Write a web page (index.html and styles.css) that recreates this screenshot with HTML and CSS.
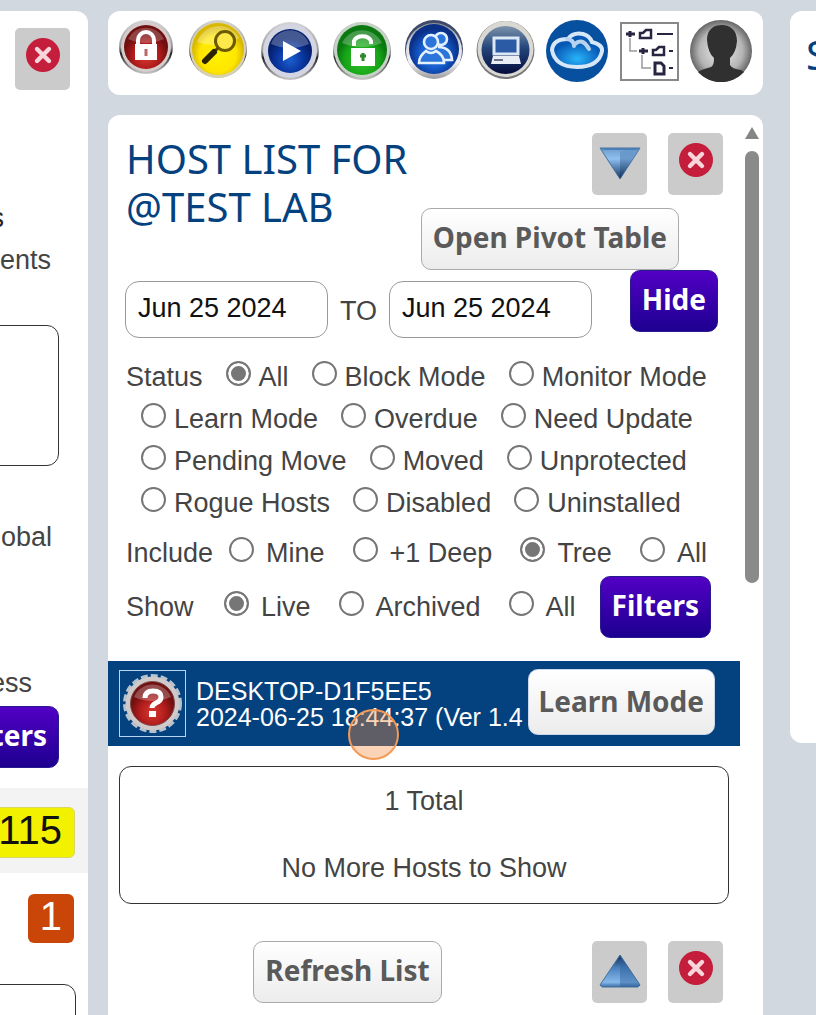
FILE: index.html
```html
<!DOCTYPE html>
<html lang="en">
<head>
    <meta charset="UTF-8">
    <meta name="viewport" content="width=device-width, initial-scale=1">
    <title>Host List</title>
    <link rel="stylesheet" href="styles.css">
</head>
<body>
    <!-- shared gradients and shapes -->
    <svg class="defs" width="0" height="0" aria-hidden="true">
        <defs>
            <linearGradient id="chrome" x1="0" y1="0" x2="0" y2="1"><stop offset="0" stop-color="#8f9096"/><stop offset=".4" stop-color="#dcdce2"/><stop offset=".7" stop-color="#f2f2f4"/><stop offset="1" stop-color="#9a9a9c"/></linearGradient>
            <linearGradient id="rim" x1="0" y1="0" x2="0" y2="1"><stop offset="0" stop-color="#d5d5d5"/><stop offset=".5" stop-color="#9a9a9a"/><stop offset=".62" stop-color="#222"/><stop offset="1" stop-color="#c9c9c9"/></linearGradient>
            <radialGradient id="red" cy=".7"><stop offset="0" stop-color="#d83a30"/><stop offset=".6" stop-color="#b01c1c"/><stop offset="1" stop-color="#701010"/></radialGradient>
            <radialGradient id="yellow" cy=".6"><stop offset="0" stop-color="#fff200"/><stop offset=".7" stop-color="#ffe600"/><stop offset="1" stop-color="#d8b800"/></radialGradient>
            <radialGradient id="blue" cy=".7"><stop offset="0" stop-color="#1d5fd0"/><stop offset=".6" stop-color="#0a36a0"/><stop offset="1" stop-color="#06206e"/></radialGradient>
            <radialGradient id="green" cy=".7"><stop offset="0" stop-color="#35c22a"/><stop offset=".7" stop-color="#16a418"/><stop offset="1" stop-color="#0a7a10"/></radialGradient>
            <radialGradient id="sky" cy=".6"><stop offset="0" stop-color="#3b8df0"/><stop offset=".6" stop-color="#1459c8"/><stop offset="1" stop-color="#0a2f86"/></radialGradient>
            <linearGradient id="navy" x1="0" y1="0" x2="0" y2="1"><stop offset="0" stop-color="#7d93ab"/><stop offset=".45" stop-color="#24467c"/><stop offset="1" stop-color="#040c3c"/></linearGradient>
            <radialGradient id="cloudfill" cy=".75"><stop offset="0" stop-color="#28b4fa"/><stop offset="1" stop-color="#0757b4"/></radialGradient>
            <radialGradient id="grey"><stop offset="0" stop-color="#eee"/><stop offset=".7" stop-color="#b4b4b4"/><stop offset="1" stop-color="#666"/></radialGradient>
            <linearGradient id="gem" x1="0" y1="0" x2="0" y2="1"><stop offset="0" stop-color="#6d9dcc"/><stop offset=".35" stop-color="#8fc0f0"/><stop offset="1" stop-color="#10325f"/></linearGradient>
            <linearGradient id="gem-shade" x1="0" y1="0" x2="0" y2="1"><stop offset="0" stop-color="#5c92c8"/><stop offset="1" stop-color="#0a2850"/></linearGradient>
            <linearGradient id="gem-rise" x1="0" y1="0" x2="0" y2="1"><stop offset="0" stop-color="#10284c"/><stop offset=".4" stop-color="#4a82be"/><stop offset=".85" stop-color="#86b8ea"/><stop offset="1" stop-color="#3a6ca2"/></linearGradient>
            <symbol id="cross" viewBox="0 0 34 34">
                <circle cx="17" cy="17" r="17" fill="#c41e3c"/>
                <path d="M11 11l12 12M23 11L11 23" stroke="#f7d5da" stroke-width="4.4" stroke-linecap="round"/>
            </symbol>
            <symbol id="gem-down" viewBox="0 0 42 34">
                <path d="M1 2h40L21 33z" fill="url(#gem)" stroke="#44719f"/>
                <path d="M21 5v28L40 2z" fill="url(#gem-shade)" opacity=".45"/>
                <path d="M2 2h38l-2 2H4z" fill="#4a7eb4"/>
            </symbol>
            <symbol id="gem-up" viewBox="0 0 42 34">
                <path d="M21 1L1 31l2 2h36l2-2z" fill="url(#gem-rise)" stroke="#44719f"/>
                <path d="M21 1v32h18l2-2z" fill="#2c5f9a" opacity=".45"/>
            </symbol>
        </defs>
    </svg>

    <div class="layout">
        <section class="panel side-left">
            <button class="icon-btn" aria-label="Close"><svg width="34" height="34"><use href="#cross"/></svg></button>
            <p class="clip-s">s</p>
            <p class="clip-ents">ents</p>
            <div class="outline-box"></div>
            <p class="clip-obal">obal</p>
            <p class="clip-ess">ess</p>
            <button class="btn btn-purple">Filters</button>
            <div class="count-row"><span class="count yellow">115</span></div>
            <span class="count orange">1</span>
            <div class="outline-box last"></div>
        </section>

        <main class="center">
            <nav class="panel toolbar">
                <a href="#" aria-label="Locked">
                    <svg width="54" height="55" viewBox="0 0 54 55">
                        <circle cx="27" cy="27" r="27" fill="url(#rim)"/><circle cx="27" cy="27" r="25" fill="#d6cccc"/><circle cx="27" cy="27" r="22" fill="url(#red)"/>
                        <path d="M9 19a20 20 0 0 1 36 0q-18 8-36 0z" fill="#fff" opacity=".22"/>
                        <path d="M19 26v-6a8 8 0 0 1 16 0v6" fill="none" stroke="#fff" stroke-width="4"/>
                        <rect x="16" y="24" width="22" height="16" fill="#fff"/><path d="M27 29v7" stroke="#b66" stroke-width="3"/>
                    </svg>
                </a>
                <a href="#" aria-label="Search">
                    <svg width="58" height="59" viewBox="0 0 58 59">
                        <circle cx="29" cy="29" r="29" fill="url(#rim)"/><circle cx="29" cy="30" r="28" fill="#d8d2b0"/><circle cx="29" cy="29" r="26" fill="url(#yellow)"/>
                        <path d="M8 22a23 23 0 0 1 42-4q-20 12-42 4z" fill="#fff" opacity=".3"/>
                        <circle cx="36" cy="21" r="9.5" fill="#ffe94a" stroke="#6b5a00" stroke-width="3"/>
                        <path d="M29 28l-5 5" stroke="#5a4a00" stroke-width="3"/><path d="M25 32L16 41" stroke="#2a2200" stroke-width="6" stroke-linecap="round"/>
                    </svg>
                </a>
                <a href="#" aria-label="Run">
                    <svg class="drop" width="58" height="59" viewBox="0 0 58 59">
                        <circle cx="29" cy="29" r="29" fill="url(#rim)"/><circle cx="29" cy="29" r="27" fill="#d3d5e2"/><circle cx="29" cy="29" r="22" fill="url(#blue)"/>
                        <path d="M10 22a20 20 0 0 1 38 0q-19 8-38 0z" fill="#fff" opacity=".25"/>
                        <path d="M22 19l18 10-18 10z" fill="#fff"/>
                    </svg>
                </a>
                <a href="#" aria-label="Unlocked">
                    <svg class="drop" width="58" height="58" viewBox="0 0 58 58">
                        <circle cx="29" cy="29" r="29" fill="url(#rim)"/><circle cx="29" cy="28" r="28" fill="#c5d2c5"/><circle cx="29" cy="28" r="25" fill="url(#green)"/>
                        <path d="M9 21a22 22 0 0 1 40 0q-20 8-40 0z" fill="#fff" opacity=".25"/>
                        <path d="M21 24v-5a9 7 0 0 1 17 0v3" fill="none" stroke="#fff" stroke-width="4"/>
                        <rect x="18" y="26" width="24" height="18" fill="#fff"/><path d="M30 31v8M27 34h6" stroke="#2a8a2a" stroke-width="3"/>
                    </svg>
                </a>
                <a href="#" aria-label="Users">
                    <svg width="58" height="59" viewBox="0 0 58 59">
                        <circle cx="29" cy="29" r="29" fill="#3d4a6a"/><circle cx="29" cy="31" r="28" fill="url(#chrome)"/><circle cx="29" cy="29" r="25" fill="url(#sky)"/>
                        <g fill="#2b74da" stroke="#e4f2ff" stroke-width="2.6">
                            <circle cx="36" cy="19" r="6"/><path d="M33 27q13 0 14 13H32"/>
                            <circle cx="26" cy="22" r="7"/><path d="M14 43q0-7 7-12 5 4 10 0 8 4 8 12z"/>
                        </g>
                    </svg>
                </a>
                <a href="#" aria-label="Computers">
                    <svg width="59" height="60" viewBox="0 0 59 60">
                        <circle cx="29.5" cy="30" r="29" fill="#777"/><circle cx="29.5" cy="29" r="28" fill="#d9d8d3"/><circle cx="29.5" cy="30" r="24" fill="url(#navy)"/>
                        <rect x="18" y="18" width="24" height="16" fill="#2a5ba4" stroke="#dce8f5" stroke-width="3"/>
                        <path d="M17 36h26l2 8H15z" fill="#e9eef5"/><path d="M18 40h9" stroke="#6b7488" stroke-width="2"/>
                    </svg>
                </a>
                <a href="#" aria-label="Cloud">
                    <svg width="62" height="62" viewBox="0 0 62 62">
                        <circle cx="31" cy="31" r="31" fill="#07509f"/>
                        <path d="M22 19q5-7 15-5 7 2 9 8 11 3 10 9-3 16-25 16T6 30q1-11 16-11z" fill="url(#cloudfill)" stroke="#d5e7f8" stroke-width="4"/>
                        <path d="M21 19q7 1 7 7M29 24q7-7 14 5" fill="none" stroke="#b9d3ee" stroke-width="4" stroke-linecap="round"/>
                    </svg>
                </a>
                <a href="#" aria-label="Tree">
                    <svg class="drop" width="59" height="59" viewBox="0 0 59 59">
                        <rect x="1" y="1" width="57" height="57" fill="#fff" stroke="#888" stroke-width="2"/>
                        <g fill="none" stroke="#999" stroke-width="1.5"><path d="M10 16v13h7M22 33v13h9"/></g>
                        <g stroke="#2a2440" stroke-width="2" fill="none">
                            <path d="M6 12h9M10 9v6M19 29h9M23 26v6" stroke-width="3"/>
                            <path d="M37 12h16M49 29h4M49 46h4"/>
                            <path d="M20 16v-5h3l3-3h5v8zM33 33v-5h3l3-3h5v8z" stroke-width="2.5"/>
                            <path d="M35 41h6l3 3v8h-9z" stroke-width="3"/>
                        </g>
                    </svg>
                </a>
                <a href="#" aria-label="Profile">
                    <svg width="62" height="62" viewBox="0 0 62 62">
                        <circle cx="31" cy="31" r="31" fill="url(#grey)"/>
                        <path d="M17 20C17 9 24 5 32 5s15 5 15 16q-1 12-7 17v7q2 4 11 5l3 2A31 31 0 0 1 8 52q2-2 13-5 3-1 3-9-6-5-7-18z" fill="#303030"/>
                    </svg>
                </a>
            </nav>

            <section class="panel hosts">
                <div class="hosts-body">
                    <header class="hosts-header">
                        <h1>HOST LIST FOR @TEST LAB</h1>
                        <div class="header-actions">
                            <div class="icon-row">
                                <button class="icon-btn gem" aria-label="Move down"><svg width="42" height="34"><use href="#gem-down"/></svg></button>
                                <button class="icon-btn" aria-label="Close"><svg width="34" height="34"><use href="#cross"/></svg></button>
                            </div>
                            <button class="btn pivot">Open Pivot Table</button>
                        </div>
                    </header>

                    <form class="filters">
                        <div class="date-row">
                            <input type="text" value="Jun 25 2024" aria-label="From date">
                            <span>TO</span>
                            <input type="text" value="Jun 25 2024" aria-label="To date">
                            <button type="button" class="btn btn-purple">Hide</button>
                        </div>

                        <div class="options status">
                            <span>Status</span>
                            <label><input type="radio" name="status" checked>All</label>
                            <label><input type="radio" name="status">Block Mode</label>
                            <label><input type="radio" name="status">Monitor Mode</label>
                            <label><input type="radio" name="status">Learn Mode</label>
                            <label><input type="radio" name="status">Overdue</label>
                            <label><input type="radio" name="status">Need Update</label>
                            <label><input type="radio" name="status">Pending Move</label>
                            <label><input type="radio" name="status">Moved</label>
                            <label><input type="radio" name="status">Unprotected</label>
                            <label><input type="radio" name="status">Rogue Hosts</label>
                            <label><input type="radio" name="status">Disabled</label>
                            <label><input type="radio" name="status">Uninstalled</label>
                        </div>

                        <div class="options include">
                            <span>Include</span>
                            <label><input type="radio" name="include">Mine</label>
                            <label><input type="radio" name="include">+1 Deep</label>
                            <label><input type="radio" name="include" checked>Tree</label>
                            <label><input type="radio" name="include">All</label>
                        </div>

                        <div class="options show">
                            <span>Show</span>
                            <label><input type="radio" name="show" checked>Live</label>
                            <label><input type="radio" name="show">Archived</label>
                            <label><input type="radio" name="show">All</label>
                            <button type="button" class="btn btn-purple">Filters</button>
                        </div>
                    </form>

                    <div class="host">
                        <div class="host-icon">
                            <svg width="59" height="59" viewBox="0 0 59 59">
                                <circle cx="29.5" cy="29.5" r="28" fill="none" stroke="#b5c3cf" stroke-width="3" stroke-dasharray="7 3"/>
                                <circle cx="29.5" cy="29.5" r="27" fill="#cfc9c9"/>
                                <circle cx="29.5" cy="29.5" r="22" fill="url(#red)" stroke="#7d4747"/>
                                <path d="M11 23a20 20 0 0 1 37 0q-18 8-37 0z" fill="#fff" opacity=".25"/>
                                <path d="M22 24q0-7 8-7t8 6q0 4-5 6-4 2-4 5" fill="none" stroke="#fff" stroke-width="5"/>
                                <rect x="26" y="37" width="7" height="6" fill="#fff"/>
                            </svg>
                        </div>
                        <div class="host-text">DESKTOP-D1F5EE5<br>2024-06-25 18:44:37 (Ver 1.4</div>
                        <button class="btn learn">Learn Mode</button>
                        <span class="click-mark"></span>
                    </div>

                    <div class="summary">
                        <p>1 Total</p>
                        <p>No More Hosts to Show</p>
                    </div>

                    <footer class="hosts-footer">
                        <div class="refresh"><button class="btn">Refresh List</button></div>
                        <div class="icon-row">
                            <button class="icon-btn gem" aria-label="Move up"><svg width="42" height="34"><use href="#gem-up"/></svg></button>
                            <button class="icon-btn" aria-label="Close"><svg width="34" height="34"><use href="#cross"/></svg></button>
                        </div>
                    </footer>
                </div>
                <div class="scrollbar">
                    <span class="scroll-up"></span>
                    <span class="scroll-thumb"></span>
                </div>
            </section>
        </main>

        <section class="panel side-right">
            <h1>S</h1>
        </section>
    </div>
</body>
</html>
```
FILE: styles.css
```css
:root {
    --page: #d1d8e0; --navy: #04427f; --text: #444; --grey-btn: #cbcbcb;
}
* { box-sizing: border-box; }
body { margin: 0; background: var(--page); color: var(--text); font-family: "Liberation Sans", Arial, sans-serif; font-size: 27px; line-height: 42px; overflow: hidden; }
h1, p { margin: 0; }
h1 { color: var(--navy); font-family: "Noto Sans", Tahoma, sans-serif; font-size: 40px; font-weight: 400; line-height: 48px; }
svg { display: block; flex: none; }
.defs { position: absolute; }

.layout { display: grid; grid-template-columns: 88px minmax(0, 1fr) 26px; min-height: 100vh; padding-top: 11px; }
.panel { background: #fff; border-radius: 12px; }
.center { display: flex; flex-direction: column; gap: 20px; margin: 0 27px 0 20px; min-width: 0; }

/* buttons */
.btn { flex: none; height: 62px; padding: 0 11px 4px; border: 1px solid #aaa; border-radius: 10px; background: linear-gradient(#fff, #ececec); color: #5a5a5a; font: 700 28px "Noto Sans", Tahoma, sans-serif; white-space: nowrap; cursor: pointer; }
.btn-purple { border-color: #2a1a90; background: linear-gradient(#5200c4, #1d0090); color: #fff; }
.icon-btn { display: flex; justify-content: center; flex: none; width: 55px; height: 62px; padding: 10px 0 0; border: none; border-radius: 5px; background: var(--grey-btn); cursor: pointer; }
.icon-btn.gem { padding-top: 13px; }
.icon-row { display: flex; gap: 21px; }

/* left column, cut by the window edge */
.side-left { display: flex; flex-direction: column; align-items: flex-end; border-radius: 0 12px 0 0; overflow: hidden; padding-top: 17px; }
.side-left .icon-btn { margin-right: 18px; }
.side-left p { flex: none; }
.clip-s { margin: 107px 84px 0 0; color: #222; }
.clip-ents { margin-right: 37px; }
.outline-box { flex: none; width: 100%; border: 1px solid #333; border-radius: 12px; }
.side-left .outline-box { width: 120px; height: 141px; margin: 44px 29px 0 0; }
.clip-obal { margin: 50px 36px 0 0; }
.clip-ess { margin: 104px 56px 0 0; }
.side-left .btn { margin: 2px 29px 20px 0; }
.count-row { display: flex; justify-content: flex-end; width: 100%; padding: 19px 13px 15px 0; background: #f3f3f3; }
.count { flex: none; padding: 0 12px 4px; border-radius: 6px; font-size: 40px; line-height: 45px; }
.count.yellow { border: 1px solid #d8d860; background: #f1f100; color: #111; }
.count.orange { margin: 21px 14px 0 0; background: #c94608; color: #fff; }
.side-left .outline-box.last { height: 80px; margin: 41px 12px 0 0; }

.side-right { align-self: start; min-height: 732px; padding: 20px 0 0 16px; border-radius: 12px 0 0 12px; overflow: hidden; }

/* icon bar */
.toolbar { display: flex; align-items: flex-start; min-height: 84px; padding: 9px 6px 9px 2px; }
.toolbar a { display: flex; flex: 1; justify-content: center; }
.drop { margin-top: 2px; }

/* host list */
.hosts { display: flex; flex: 1; }
.hosts-body { flex: 1; min-width: 0; }
.hosts-header { display: flex; padding: 20px 17px 0 18px; }
.hosts-header h1 { flex: 1; }
.header-actions { display: flex; flex-direction: column; align-items: flex-end; gap: 13px; }
.header-actions .icon-row { margin-top: -2px; }
.pivot { margin-right: 44px; }

.filters { padding: 0 17px; }
.date-row { display: flex; align-items: flex-start; gap: 12px; }
.date-row input { flex: 0 1 203px; min-width: 0; height: 57px; margin-top: 11px; padding: 0 12px 2px; border: 1px solid #999; border-radius: 14px; background: #fff; color: #111; font: inherit; }
.date-row span { margin-top: 20px; }
.date-row .btn { margin: 0 5px 0 auto; }

.options { display: flex; align-items: center; padding-left: 1px; }
.options label { display: flex; align-items: center; white-space: nowrap; }
.options input { appearance: none; flex: none; width: 25px; height: 25px; margin: 0 8px 8px 0; border: 2px solid #767676; border-radius: 50%; background: #fff; }
.options input:checked { background: #767676; box-shadow: inset 0 0 0 3px #fff; }
.status { flex-wrap: wrap; column-gap: 8px; margin-top: 18px; }
.status label { margin-left: 15px; }
.include { margin-top: 8px; }
.include span { width: 103px; }
.show { margin-top: 2px; }
.show span { width: 98px; }
.include label, .show label { margin-right: 28px; }
.include label:last-child { margin-right: 0; }
.include input, .show input { margin-right: 12px; }
.show .btn { margin-left: -4px; }

.host { position: relative; display: flex; align-items: center; margin-top: 23px; padding: 8px 25px 8px 11px; background: var(--navy); }
.host-icon { flex: none; padding: 3px; border: 1px solid #b9d4f0; }
.host-text { flex: 1; min-width: 0; margin-left: 10px; overflow: hidden; color: #fff; font-size: 25px; line-height: 26px; white-space: nowrap; }
.learn { height: 66px; margin-bottom: 3px; padding: 0 10px 2px; border-color: #ccd8ea; }
.click-mark { position: absolute; top: 48px; left: 240px; width: 51px; height: 51px; border: 2px solid #f39a55; border-radius: 50%; background: rgba(244, 140, 64, 0.38); }

.summary { display: flex; flex-direction: column; gap: 25px; margin: 20px 11px 0; padding: 13px 0 14px; border: 1px solid #333; border-radius: 12px; text-align: center; }
.hosts-footer { display: flex; padding: 37px 17px 11px; }
.refresh { flex: 1; padding-right: 22px; text-align: center; }

.scrollbar { display: flex; flex-direction: column; align-items: center; flex: none; width: 23px; padding-top: 12px; }
.scroll-up { border: 7px solid transparent; border-top: none; border-bottom: 12px solid #858585; }
.scroll-thumb { width: 14px; height: 432px; margin-top: 12px; border-radius: 7px; background: #8a8a88; }
```
